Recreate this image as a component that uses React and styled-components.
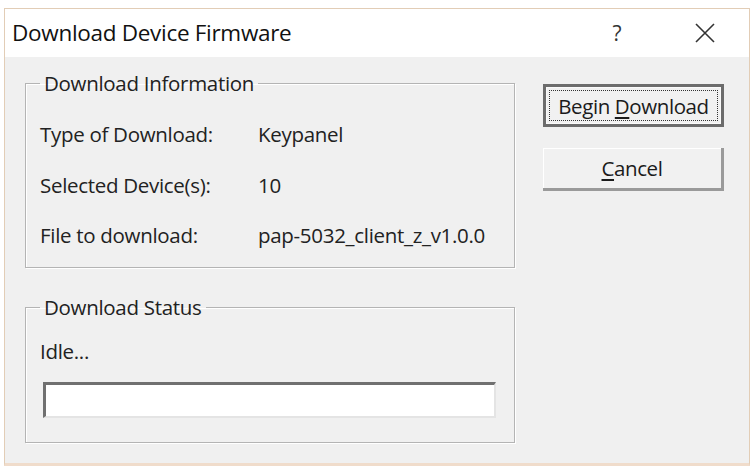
import React from "react";
import styled, { createGlobalStyle } from "styled-components";

const GlobalStyle = createGlobalStyle`
  html, body {
    margin: 0;
    padding: 0;
    background: #ffffff;
  }
  body {
    font-family: "Open Sans", "Noto Sans", "Liberation Sans", sans-serif;
    color: #1b1b1b;
  }
`;

const Page = styled.div`
  padding: 8px 4px 4px 4px;
  width: 754px;
  height: 470px;
  box-sizing: border-box;
`;

const Window = styled.div`
  width: 746px;
  height: 458px;
  box-sizing: border-box;
  border: 1px solid #e2cdb6;
  border-bottom: 3px solid #f0dccb;
  display: flex;
  flex-direction: column;
  background: #f0f0f0;
`;

const TitleBar = styled.div`
  height: 48px;
  background: #ffffff;
  display: flex;
  align-items: center;
  padding-left: 7px;
  flex-shrink: 0;
`;

const Title = styled.span`
  font-size: 22.5px;
  flex: 1;
  letter-spacing: -0.3px;
  color: #111;
  margin-top: -1px;
`;

const TitleButton = styled.span`
  width: ${({ w }) => w}px;
  margin-left: ${({ gap }) => gap || 0}px;
  display: flex;
  align-items: center;
  justify-content: center;
  font-size: 21px;
  color: #333;
`;

const Body = styled.div`
  flex: 1;
  display: flex;
  padding: 13px 0 0 20px;
  gap: 28px;
`;

const LeftColumn = styled.div`
  width: 490px;
  display: flex;
  flex-direction: column;
  gap: 26px;
`;

const GroupBox = styled.fieldset`
  margin: 0;
  padding: 0 0 0 14px;
  height: ${({ h }) => h}px;
  box-sizing: border-box;
  border: 1px solid #b4b4b4;
  box-shadow: inset 1px 1px 0 #ffffff, 1px 1px 0 #ffffff;
  border-radius: 0;
`;

const Legend = styled.legend`
  font-size: 20.5px;
  padding: 0 4px;
  margin-left: 0;
  color: #222;
  letter-spacing: -0.3px;
  line-height: 27px;
`;

const InfoGrid = styled.div`
  display: grid;
  grid-template-columns: 218px 1fr;
  grid-auto-rows: 50.5px;
  align-items: center;
  padding-top: 12px;
  font-size: 20.5px;
  letter-spacing: -0.3px;
`;

const Label = styled.span`
  color: #222;
`;

const Value = styled.span`
  color: #222;
`;

const StatusText = styled.div`
  font-size: 20.5px;
  padding-top: 17px;
  line-height: 27px;
  letter-spacing: -0.3px;
  color: #222;
`;

const ProgressBox = styled.div`
  margin-top: 17px;
  margin-left: 3px;
  width: 453px;
  height: 36px;
  box-sizing: border-box;
  background: #ffffff;
  border-top: 3px solid #707070;
  border-left: 3px solid #707070;
  border-right: 2px solid #e4e4e4;
  border-bottom: 2px solid #e4e4e4;
`;

const RightColumn = styled.div`
  display: flex;
  flex-direction: column;
  gap: 21px;
  padding-top: 14px;
`;

const Button = styled.button`
  width: 181px;
  height: 43px;
  box-sizing: border-box;
  font-family: inherit;
  font-size: 20.5px;
  letter-spacing: -0.4px;
  color: #1b1b1b;
  background: #f1f1f1;
  cursor: pointer;
  padding: 0;
  position: relative;
  border: ${({ primary }) => (primary ? "3px solid #6c6c6c" : "none")};
  border-right: ${({ primary }) =>
    primary ? "3px solid #6c6c6c" : "3px solid #9a9a9a"};
  border-bottom: ${({ primary }) =>
    primary ? "3px solid #6c6c6c" : "3px solid #9a9a9a"};
  box-shadow: ${({ primary }) =>
    primary ? "inset 0 0 0 1px #fafafa" : "inset 1px 1px 0 #ffffff"};
  outline: none;
`;

const FocusRing = styled.span`
  position: absolute;
  inset: 3px;
  border: 1px dotted #333;
  display: flex;
  align-items: center;
  justify-content: center;
`;

const ButtonLabel = styled.span`
  display: flex;
  align-items: center;
  justify-content: center;
  height: 100%;
`;

const Key = styled.u`
  text-underline-offset: 3px;
`;

const CloseIcon = () => (
  <svg width="22" height="22" viewBox="0 0 22 22">
    <path d="M2 2L20 20M20 2L2 20" stroke="#333" strokeWidth="1.6" />
  </svg>
);

export default function App() {
  return (
    <>
      <GlobalStyle />
      <Page>
        <Window>
          <TitleBar>
            <Title>Download Device Firmware</Title>
            <TitleButton w={46}>?</TitleButton>
            <TitleButton w={86} gap={22}>
              <CloseIcon />
            </TitleButton>
            <TitleButton w={1} />
          </TitleBar>
          <Body>
            <LeftColumn>
              <GroupBox h={198}>
                <Legend>Download Information</Legend>
                <InfoGrid>
                  <Label>Type of Download:</Label>
                  <Value>Keypanel</Value>
                  <Label>Selected Device(s):</Label>
                  <Value>10</Value>
                  <Label>File to download:</Label>
                  <Value>pap-5032_client_z_v1.0.0</Value>
                </InfoGrid>
              </GroupBox>
              <GroupBox h={149}>
                <Legend>Download Status</Legend>
                <StatusText>Idle...</StatusText>
                <ProgressBox />
              </GroupBox>
            </LeftColumn>
            <RightColumn>
              <Button primary>
                <FocusRing>
                  Begin&nbsp;<Key>D</Key>ownload
                </FocusRing>
              </Button>
              <Button>
                <ButtonLabel>
                  <Key>C</Key>ancel
                </ButtonLabel>
              </Button>
            </RightColumn>
          </Body>
        </Window>
      </Page>
    </>
  );
}
